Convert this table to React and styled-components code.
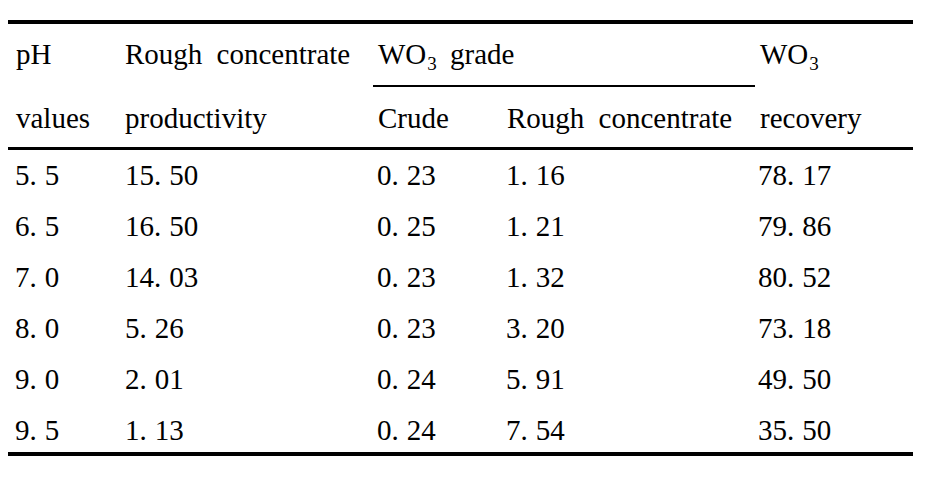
import React from "react";
import styled, { createGlobalStyle } from "styled-components";

const Global = createGlobalStyle`
  html, body { margin: 0; padding: 0; background: #fff; }
  body { font-family: "Liberation Serif", "Times New Roman", serif; color: #000; }
`;

const Page = styled.div`
  padding: 20px 18px 0 8px;
  width: 905px;
`;

const Table = styled.div`
  border-top: 4px solid #000;
  border-bottom: 4px solid #000;
`;

const Head = styled.div`
  display: grid;
  grid-template-columns: 109px 253px 129px 253px 161px;
  grid-template-rows: 63px 60px;
  border-bottom: 3px solid #000;
  font-size: 29px;
  word-spacing: 7px;
`;

const HeadCell = styled.div`
  padding-left: 8px;
  padding-top: ${(p) => (p.$row === 2 ? "1px" : "0")};
  line-height: 61px;
  white-space: nowrap;
  grid-column: ${(p) => p.$col};
  grid-row: ${(p) => p.$row};
`;

const GroupCell = styled(HeadCell)`
  border-bottom: 2px solid #000;
  margin: 0 -3px 0 3px;
  padding-left: 5px;
  word-spacing: 0;
`;

const Sub = styled.sub`
  font-size: 19px;
  vertical-align: -6px;
  line-height: 0;
  margin-left: 1px;
  margin-right: 6px;
`;

const Body = styled.div`
  display: grid;
  grid-template-columns: 109px 253px 129px 253px 161px;
  grid-template-rows: repeat(5, 51px) 47px;
  font-size: 29px;
`;

const Cell = styled.div`
  padding-left: ${(p) => p.$pad ?? 8}px;
  line-height: 51px;
  white-space: nowrap;
`;

const Dot = styled.span`
  margin-right: 8px;
`;

const Num = ({ v }) => {
  const [a, b] = v.split(".");
  return (
    <>
      {a}
      <Dot>.</Dot>
      {b}
    </>
  );
};

const rows = [
  ["5.5", "15.50", "0.23", "1.16", "78.17"],
  ["6.5", "16.50", "0.25", "1.21", "79.86"],
  ["7.0", "14.03", "0.23", "1.32", "80.52"],
  ["8.0", "5.26", "0.23", "3.20", "73.18"],
  ["9.0", "2.01", "0.24", "5.91", "49.50"],
  ["9.5", "1.13", "0.24", "7.54", "35.50"],
];

const pads = [7, 8, 7, 7, 6];

export default function App() {
  return (
    <>
      <Global />
      <Page>
        <Table>
          <Head>
            <HeadCell $col={1} $row={1}>pH</HeadCell>
            <HeadCell $col={2} $row={1}>Rough concentrate</HeadCell>
            <GroupCell $col="3 / span 2" $row={1}>
              WO<Sub>3</Sub> grade
            </GroupCell>
            <HeadCell $col={5} $row={1}>
              WO<Sub>3</Sub>
            </HeadCell>
            <HeadCell $col={1} $row={2}>values</HeadCell>
            <HeadCell $col={2} $row={2}>productivity</HeadCell>
            <HeadCell $col={3} $row={2}>Crude</HeadCell>
            <HeadCell $col={4} $row={2}>Rough concentrate</HeadCell>
            <HeadCell $col={5} $row={2}>recovery</HeadCell>
          </Head>
          <Body>
            {rows.map((r, i) =>
              r.map((v, j) => (
                <Cell key={`${i}-${j}`} $pad={pads[j]}>
                  <Num v={v} />
                </Cell>
              ))
            )}
          </Body>
        </Table>
      </Page>
    </>
  );
}
